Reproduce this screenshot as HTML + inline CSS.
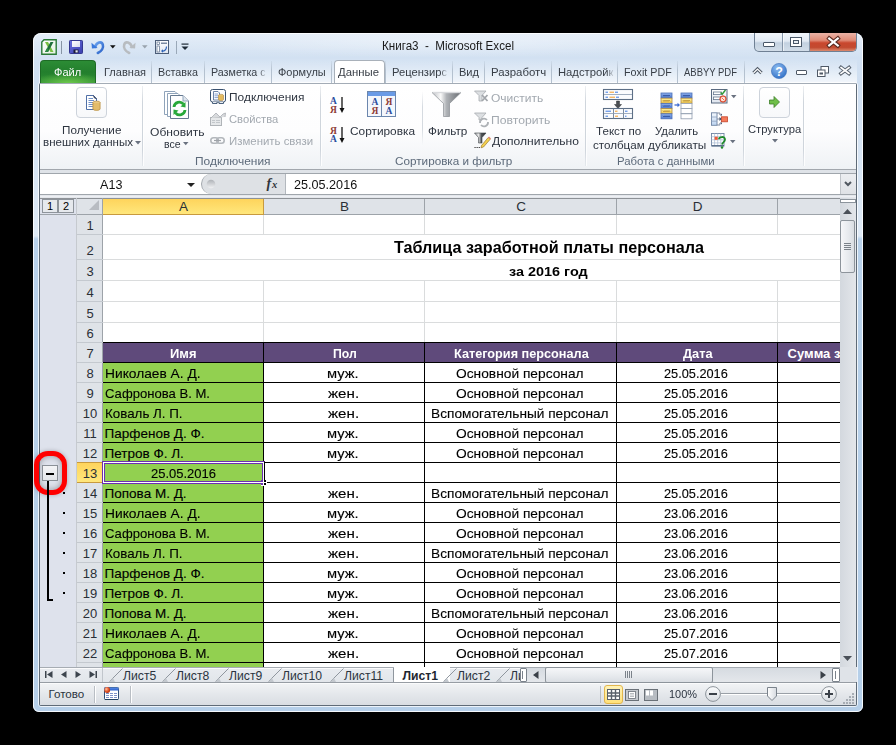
<!DOCTYPE html><html><head><meta charset="utf-8"><style>
*{margin:0;padding:0;box-sizing:border-box}
html,body{width:896px;height:745px;overflow:hidden;background:#000;font-family:"Liberation Sans",sans-serif;position:relative}
.abs{position:absolute}
.t{position:absolute;white-space:nowrap;line-height:1;}
svg{overflow:visible}
</style></head><body>
<div class="abs" style="left:33px;top:33px;width:830px;height:679px;border-radius:8px 8px 6px 6px;background:linear-gradient(180deg,#dbe7f5 0px,#d2e1f2 25px,#cfdff1 50px,#d6e4f3 120px,#dfeaf6 203px,#b9d2eb 206px,#b5cfe9 100%);"></div>
<div class="abs" style="left:33px;top:33px;width:830px;height:679px;border-radius:8px 8px 6px 6px;border:1px solid rgba(255,255,255,0.85);"></div>
<div class="abs" style="left:34px;top:34px;width:828px;height:24px;border-radius:7px 7px 0 0;background:linear-gradient(180deg,rgba(255,255,255,0.25),rgba(255,255,255,0.0));"></div>
<div class="abs" style="left:200px;top:34px;width:480px;height:24px;background:radial-gradient(ellipse at 50% 30%,rgba(255,255,255,0.35),rgba(255,255,255,0) 70%);"></div>
<div class="abs" style="left:39px;top:58px;width:818px;height:25px;background:linear-gradient(180deg,rgba(255,255,255,0.0),rgba(255,255,255,0.35) 50%,rgba(255,255,255,0.75));"></div>
<div class="abs" style="left:38px;top:82px;width:820px;height:625px;border:1px solid rgba(255,255,255,0.75);border-radius:3px;"></div>
<div class="abs" style="left:39px;top:83px;width:818px;height:623px;background:#5f6b77;border-radius:2px;"></div>
<svg class="abs" style="left:41px;top:39px;" width="16" height="16" viewBox="0 0 16 16"><defs><linearGradient id="xb" x1="0" y1="0" x2="1" y2="1"><stop offset="0" stop-color="#ffffff"/><stop offset="1" stop-color="#e4f1e0"/></linearGradient></defs><path d="M3 0.8 H15.2 V15.2 H0.8 V3 Z" fill="url(#xb)" stroke="#2a7a37" stroke-width="1.4"/><path d="M4 3 H7 L12.5 13 H9.5 Z" fill="#79c043"/><path d="M9.5 3 H12.5 L7 13 H4 Z" fill="#1f6f3a"/><path d="M6.3 8.5 L4 13 H7 L7.8 11.4Z" fill="#2c8a43"/></svg>
<div class="abs" style="left:61px;top:41px;width:1px;height:13px;background:#8795a5;"></div>
<svg class="abs" style="left:69px;top:40px;" width="14" height="14" viewBox="0 0 14 14"><defs><linearGradient id="sv" x1="0" y1="0" x2="1" y2="1"><stop offset="0" stop-color="#6a70e0"/><stop offset="1" stop-color="#3b3fae"/></linearGradient><linearGradient id="svl" x1="0" y1="0" x2="1" y2="1"><stop offset="0" stop-color="#ffffff"/><stop offset="1" stop-color="#d8dcef"/></linearGradient></defs><rect x="0.5" y="0.5" width="13" height="13" rx="0.8" fill="url(#sv)" stroke="#34388f"/><rect x="3" y="1" width="8" height="6" fill="url(#svl)"/><rect x="4.5" y="9.5" width="5" height="3.5" fill="#1c1c3a"/><rect x="6.5" y="10.3" width="2.2" height="2.2" fill="#e6e8f2"/></svg>
<svg class="abs" style="left:91px;top:40px;" width="14" height="14" viewBox="0 0 14 14"><defs><linearGradient id="ug" x1="0" y1="0" x2="1" y2="1"><stop offset="0" stop-color="#6aa2ee"/><stop offset="1" stop-color="#2a62c8"/></linearGradient></defs><path d="M4.2 6.8 C5.5 2.2 10.5 0.8 11.8 4.6 C12.8 7.8 10.5 11.2 6.8 13" fill="none" stroke="url(#ug)" stroke-width="2.6" stroke-linecap="round"/><path d="M0.5 2.8 L0.9 8.6 L6.6 8.1 Z" fill="#3a78dc"/></svg>
<svg class="abs" style="left:110px;top:44.5px;" width="6" height="4" viewBox="0 0 6 4"><path d="M0 0.3 H5.6 L2.8 3.6 Z" fill="#111"/></svg>
<svg class="abs" style="left:122px;top:40px;" width="14" height="14" viewBox="0 0 14 14"><path d="M9.8 6.8 C8.5 2.2 3.5 0.8 2.2 4.6 C1.2 7.8 3.5 11.2 7.2 13" fill="none" stroke="#b8bcc0" stroke-width="2.6" stroke-linecap="round"/><path d="M13.5 2.8 L13.1 8.6 L7.4 8.1 Z" fill="#b8bcc0"/></svg>
<svg class="abs" style="left:142px;top:44.5px;" width="6" height="4" viewBox="0 0 6 4"><path d="M0 0.3 H5.6 L2.8 3.6 Z" fill="#9aa3ad"/></svg>
<svg class="abs" style="left:155px;top:40px;" width="14" height="14" viewBox="0 0 14 14"><defs><linearGradient id="cu" x1="0" y1="0" x2="0" y2="1"><stop offset="0" stop-color="#ffffff"/><stop offset="1" stop-color="#dfe6f0"/></linearGradient></defs><rect x="0.5" y="0.5" width="13" height="13" fill="url(#cu)" stroke="#4b5d78"/><rect x="2" y="2" width="2.5" height="2.5" fill="#fff" stroke="#5a6e8c" stroke-width="0.7"/><path d="M6 3.2 H12" stroke="#5a6e8c" stroke-width="1.2"/><rect x="2" y="6" width="2.5" height="6" fill="#fff" stroke="#5a6e8c" stroke-width="0.7"/><path d="M11.5 6.5 C11.5 10 9 11.5 7 11" fill="none" stroke="#2f64b8" stroke-width="1.2"/><path d="M6 11 L8 9.3 L8 12.7Z" fill="#2f64b8"/></svg>
<div class="abs" style="left:176px;top:41px;width:1px;height:13px;background:#9aa8b8;"></div>
<svg class="abs" style="left:181px;top:43px;" width="8" height="8" viewBox="0 0 8 8"><rect x="0.5" y="0.5" width="7" height="1.2" fill="#1e2a36"/><path d="M0.5 3.5 H7.5 L4 7 Z" fill="#1e2a36"/></svg>
<div class="t" style="left:381.6px;top:40.1px;font-size:12.2px;color:#1a1a1a;font-weight:400;transform:scaleX(0.9523);transform-origin:0 0;">Книга3&nbsp;&nbsp;-&nbsp;&nbsp;Microsoft Excel</div>
<div class="abs" style="left:754px;top:33px;width:103px;height:19px;border-radius:0 0 5px 5px;border:1px solid #6f8094;border-top:none;background:linear-gradient(180deg,#f1f5fa 0%,#e2eaf3 45%,#c3d1e0 55%,#d2dde9 100%);overflow:hidden;"></div>
<div class="abs" style="left:782px;top:33px;width:1px;height:18px;background:#8595a8;"></div>
<div class="abs" style="left:783px;top:33px;width:1px;height:18px;background:rgba(255,255,255,0.6);"></div>
<div class="abs" style="left:809px;top:33px;width:1px;height:18px;background:#8595a8;"></div>
<div class="abs" style="left:810px;top:33px;width:46px;height:18px;border-radius:0 0 4px 0;background:linear-gradient(180deg,#eab3a6 0%,#e08c78 40%,#c9472e 55%,#c24a30 80%,#dc8a6e 100%);"></div>
<div class="abs" style="left:763px;top:42px;width:12px;height:5px;background:#fff;border:1px solid #4a5868;border-radius:1px;"></div>
<div class="abs" style="left:790px;top:37px;width:12px;height:10px;border:1px solid #4a5868;background:#fff;"></div>
<div class="abs" style="left:793px;top:40px;width:6px;height:4px;border:1px solid #4a5868;background:#e8edf2;"></div>
<svg class="abs" style="left:827px;top:37px;" width="13" height="10" viewBox="0 0 13 10"><path d="M2.2 1.5 L10.8 8.5 M10.8 1.5 L2.2 8.5" stroke="#5a2a20" stroke-width="4.2" stroke-linecap="square"/><path d="M2.2 1.5 L10.8 8.5 M10.8 1.5 L2.2 8.5" stroke="#fff" stroke-width="2.2" stroke-linecap="square"/></svg>
<div class="abs" style="left:40px;top:60px;width:56px;height:23px;border-radius:4px 4px 0 0;border:1px solid #1d6b25;border-bottom:none;background:radial-gradient(ellipse 70% 45% at 50% 100%,rgba(120,210,80,0.85),rgba(120,210,80,0) 100%),linear-gradient(180deg,#2c8c35 0%,#237f2d 50%,#2f8f34 100%);"></div>
<div class="t" style="left:54.2px;top:66.6px;font-size:11.8px;color:#ffffff;font-weight:400;transform:scaleX(0.9374);transform-origin:0 0;">Файл</div>
<div class="abs" style="left:151px;top:61px;width:1px;height:22px;background:linear-gradient(180deg,rgba(170,185,200,0.2),#b4c1cf 40%,#b4c1cf);"></div>
<div class="abs" style="left:204px;top:61px;width:1px;height:22px;background:linear-gradient(180deg,rgba(170,185,200,0.2),#b4c1cf 40%,#b4c1cf);"></div>
<div class="abs" style="left:271px;top:61px;width:1px;height:22px;background:linear-gradient(180deg,rgba(170,185,200,0.2),#b4c1cf 40%,#b4c1cf);"></div>
<div class="abs" style="left:331px;top:61px;width:1px;height:22px;background:linear-gradient(180deg,rgba(170,185,200,0.2),#b4c1cf 40%,#b4c1cf);"></div>
<div class="abs" style="left:385px;top:61px;width:1px;height:22px;background:linear-gradient(180deg,rgba(170,185,200,0.2),#b4c1cf 40%,#b4c1cf);"></div>
<div class="abs" style="left:452px;top:61px;width:1px;height:22px;background:linear-gradient(180deg,rgba(170,185,200,0.2),#b4c1cf 40%,#b4c1cf);"></div>
<div class="abs" style="left:484px;top:61px;width:1px;height:22px;background:linear-gradient(180deg,rgba(170,185,200,0.2),#b4c1cf 40%,#b4c1cf);"></div>
<div class="abs" style="left:551px;top:61px;width:1px;height:22px;background:linear-gradient(180deg,rgba(170,185,200,0.2),#b4c1cf 40%,#b4c1cf);"></div>
<div class="abs" style="left:617px;top:61px;width:1px;height:22px;background:linear-gradient(180deg,rgba(170,185,200,0.2),#b4c1cf 40%,#b4c1cf);"></div>
<div class="abs" style="left:677px;top:61px;width:1px;height:22px;background:linear-gradient(180deg,rgba(170,185,200,0.2),#b4c1cf 40%,#b4c1cf);"></div>
<div class="abs" style="left:744px;top:61px;width:1px;height:22px;background:linear-gradient(180deg,rgba(170,185,200,0.2),#b4c1cf 40%,#b4c1cf);"></div>
<div class="abs" style="left:334px;top:60px;width:51px;height:24px;border-radius:4px 4px 0 0;border:1px solid #a9b1ba;border-bottom:none;background:#fff;"></div>
<div class="t" style="left:103.7px;top:66.1px;font-size:11.6px;color:#383e46;font-weight:400;transform:scaleX(0.9515);transform-origin:0 0;">Главная</div>
<div class="t" style="left:158px;top:66.1px;font-size:11.6px;color:#383e46;font-weight:400;transform:scaleX(0.9282);transform-origin:0 0;">Вставка</div>
<div class="t" style="left:211.4px;top:66.1px;font-size:11.6px;color:#383e46;font-weight:400;transform:scaleX(0.9235);transform-origin:0 0;-webkit-mask-image:linear-gradient(90deg,#000 88%,rgba(0,0,0,0.15));">Разметка с</div>
<div class="t" style="left:277.9px;top:66.1px;font-size:11.6px;color:#383e46;font-weight:400;transform:scaleX(0.9454);transform-origin:0 0;">Формулы</div>
<div class="t" style="left:337.9px;top:66.1px;font-size:11.6px;color:#383e46;font-weight:400;transform:scaleX(0.9787);transform-origin:0 0;">Данные</div>
<div class="t" style="left:392px;top:66.1px;font-size:11.6px;color:#383e46;font-weight:400;transform:scaleX(0.9636);transform-origin:0 0;-webkit-mask-image:linear-gradient(90deg,#000 88%,rgba(0,0,0,0.15));">Рецензирс</div>
<div class="t" style="left:459px;top:66.1px;font-size:11.6px;color:#383e46;font-weight:400;transform:scaleX(0.9531);transform-origin:0 0;">Вид</div>
<div class="t" style="left:491.4px;top:66.1px;font-size:11.6px;color:#383e46;font-weight:400;transform:scaleX(0.9846);transform-origin:0 0;">Разработч</div>
<div class="t" style="left:557.6px;top:66.1px;font-size:11.6px;color:#383e46;font-weight:400;transform:scaleX(0.9695);transform-origin:0 0;-webkit-mask-image:linear-gradient(90deg,#000 88%,rgba(0,0,0,0.15));">Надстройк</div>
<div class="t" style="left:624px;top:66.1px;font-size:11.6px;color:#383e46;font-weight:400;transform:scaleX(0.9254);transform-origin:0 0;">Foxit PDF</div>
<div class="t" style="left:684px;top:66.1px;font-size:11.6px;color:#383e46;font-weight:400;transform:scaleX(0.8170);transform-origin:0 0;">ABBYY PDF</div>
<svg class="abs" style="left:752px;top:67px;" width="11" height="8" viewBox="0 0 11 8"><path d="M1.5 6 L5.5 2 L9.5 6" fill="none" stroke="#4f5966" stroke-width="3.2" stroke-linejoin="miter"/><path d="M1.5 6 L5.5 2 L9.5 6" fill="none" stroke="#fff" stroke-width="1.2"/></svg>
<svg class="abs" style="left:771px;top:63px;" width="16" height="16" viewBox="0 0 16 16"><defs><radialGradient id="hg" cx="40%" cy="30%" r="70%"><stop offset="0" stop-color="#8dbcf0"/><stop offset="1" stop-color="#3574c9"/></radialGradient></defs><circle cx="8" cy="8" r="7.6" fill="url(#hg)" stroke="#3a6fb8" stroke-width="0.6"/><text x="8" y="12.8" text-anchor="middle" font-family="Liberation Sans" font-weight="700" font-size="12.5" fill="#fff">?</text></svg>
<div class="abs" style="left:796px;top:70px;width:11px;height:5px;border:1px solid #4f5966;background:#fff;border-radius:1px;"></div>
<svg class="abs" style="left:817px;top:66px;" width="12" height="11" viewBox="0 0 12 11"><rect x="4" y="0.5" width="7.5" height="6.5" fill="#fff" stroke="#4f5966"/><rect x="0.5" y="4" width="7.5" height="6.5" fill="#fff" stroke="#4f5966"/><rect x="2.5" y="6.5" width="3.5" height="2" fill="#4f5966"/></svg>
<svg class="abs" style="left:839px;top:66px;" width="12" height="9" viewBox="0 0 12 9"><path d="M2 1.5 L10 7.5 M10 1.5 L2 7.5" stroke="#5a6470" stroke-width="3.6" stroke-linecap="square"/><path d="M2 1.5 L10 7.5 M10 1.5 L2 7.5" stroke="#fff" stroke-width="1.6" stroke-linecap="square"/></svg>
<div class="abs" style="left:40px;top:83px;width:816px;height:86px;background:linear-gradient(180deg,#ffffff 0%,#fdfdfe 55%,#eff2f5 100%);border-top:1px solid #a3acb6;"></div>
<div class="abs" style="left:40px;top:169px;width:816px;height:1px;background:#a2a7ad;"></div>
<div class="abs" style="left:142px;top:86px;width:1px;height:80px;background:linear-gradient(180deg,rgba(200,207,215,0.3),#cfd5dc 20%,#cfd5dc 80%,rgba(200,207,215,0.3));"></div>
<div class="abs" style="left:143px;top:86px;width:1px;height:80px;background:rgba(255,255,255,0.8);"></div>
<div class="abs" style="left:320px;top:86px;width:1px;height:80px;background:linear-gradient(180deg,rgba(200,207,215,0.3),#cfd5dc 20%,#cfd5dc 80%,rgba(200,207,215,0.3));"></div>
<div class="abs" style="left:321px;top:86px;width:1px;height:80px;background:rgba(255,255,255,0.8);"></div>
<div class="abs" style="left:585px;top:86px;width:1px;height:80px;background:linear-gradient(180deg,rgba(200,207,215,0.3),#cfd5dc 20%,#cfd5dc 80%,rgba(200,207,215,0.3));"></div>
<div class="abs" style="left:586px;top:86px;width:1px;height:80px;background:rgba(255,255,255,0.8);"></div>
<div class="abs" style="left:743px;top:86px;width:1px;height:80px;background:linear-gradient(180deg,rgba(200,207,215,0.3),#cfd5dc 20%,#cfd5dc 80%,rgba(200,207,215,0.3));"></div>
<div class="abs" style="left:744px;top:86px;width:1px;height:80px;background:rgba(255,255,255,0.8);"></div>
<div class="abs" style="left:803px;top:86px;width:1px;height:80px;background:linear-gradient(180deg,rgba(200,207,215,0.3),#cfd5dc 20%,#cfd5dc 80%,rgba(200,207,215,0.3));"></div>
<div class="abs" style="left:804px;top:86px;width:1px;height:80px;background:rgba(255,255,255,0.8);"></div>
<div class="t" style="left:194.79999999999998px;top:154.9px;font-size:11.6px;color:#5d6a7a;font-weight:400;transform:scaleX(1.0305);transform-origin:0 0;">Подключения</div>
<div class="t" style="left:395.0px;top:154.9px;font-size:11.6px;color:#5d6a7a;font-weight:400;transform:scaleX(1.0100);transform-origin:0 0;">Сортировка и фильтр</div>
<div class="t" style="left:616.8000000000001px;top:154.9px;font-size:11.6px;color:#5d6a7a;font-weight:400;transform:scaleX(0.9829);transform-origin:0 0;">Работа с данными</div>
<div class="abs" style="left:76px;top:87px;width:31px;height:31px;border:1px solid #cdd3db;border-radius:4px;background:linear-gradient(180deg,#fff,#f7f8fa);"></div>
<svg class="abs" style="left:86px;top:95px;" width="15" height="16" viewBox="0 0 15 16"><path d="M0.5 0.5 H7.5 L10.5 3.5 V14.5 H0.5 Z" fill="#fff" stroke="#4f6fa6"/><path d="M2.5 3.5 H7 M2.5 5.5 H8 M2.5 7.5 H8 M2.5 9.5 H8 M2.5 11.5 H8" stroke="#6d8fc8" stroke-width="1"/><path d="M7.5 0.5 L8.5 3 L10.5 3.5" fill="none" stroke="#2a3550"/><ellipse cx="10.5" cy="7.5" rx="3.6" ry="1.4" fill="#f2d79a" stroke="#b58a3a" stroke-width="0.7"/><path d="M6.9 7.5 V14 A3.6 1.4 0 0 0 14.1 14 V7.5" fill="#e3bc6a" stroke="#b58a3a" stroke-width="0.7"/></svg>
<div class="t" style="left:61.6px;top:123.7px;font-size:11.6px;color:#2e3540;font-weight:400;transform:scaleX(1.0084);transform-origin:0 0;">Получение</div>
<div class="t" style="left:42.6px;top:135.7px;font-size:11.6px;color:#2e3540;font-weight:400;transform:scaleX(0.9960);transform-origin:0 0;">внешних данных</div>
<svg class="abs" style="left:135px;top:141px;" width="6" height="4" viewBox="0 0 6 4"><path d="M0 0 H6 L3 3.5Z" fill="#6a7280"/></svg>
<svg class="abs" style="left:163px;top:90px;" width="28" height="30" viewBox="0 0 28 30"><path d="M1.5 1.5 H12 L14 3.5 V24.5 H1.5Z" fill="#fff" stroke="#8fa3ba"/><path d="M4.5 3.5 H15 L17 5.5 V26.5 H4.5Z" fill="#fff" stroke="#8fa3ba"/><path d="M7.5 5.5 H20 L25.5 11 V28.5 H7.5Z" fill="#fdfdfe" stroke="#64788f"/><path d="M20 5.5 V11 H25.5" fill="#dfe6ee" stroke="#8fa3ba"/><path d="M11 17 A5.3 5.3 0 0 1 20.5 14.2" fill="none" stroke="#27a83a" stroke-width="2.8"/><path d="M22.5 12 L22.5 17.5 L17.5 16.5Z" fill="#27a83a"/><path d="M22 20 A5.3 5.3 0 0 1 12.5 22.8" fill="none" stroke="#27a83a" stroke-width="2.8"/><path d="M10.5 25 L10.5 19.5 L15.5 20.5Z" fill="#27a83a"/></svg>
<div class="t" style="left:149.7px;top:125.9px;font-size:11.6px;color:#2e3540;font-weight:400;transform:scaleX(1.0400);transform-origin:0 0;">Обновить</div>
<div class="t" style="left:163.79999999999998px;top:137.6px;font-size:11.6px;color:#2e3540;font-weight:400;transform:scaleX(0.9080);transform-origin:0 0;">все</div>
<svg class="abs" style="left:183px;top:142px;" width="6" height="4" viewBox="0 0 6 4"><path d="M0 0 H5.5 L2.75 3.2Z" fill="#6a7280"/></svg>
<svg class="abs" style="left:210px;top:89px;" width="17" height="16" viewBox="0 0 17 16"><path d="M2.5 0.5 H13.5 A2 2 0 0 1 15.5 2.5 V11 A2 2 0 0 1 13.5 13 H2.5 A2 2 0 0 1 0.5 11 V2.5 A2 2 0 0 1 2.5 0.5Z" fill="#fbfcfe" stroke="#38506e"/><path d="M2.5 13 V14.5 H7 V13 M9 13 V14.5 H13.5 V13" fill="#e8edf3" stroke="#38506e" stroke-width="0.9"/><path d="M3.5 2.5 H8 L9.5 4 V11 H3.5Z" fill="#fff" stroke="#4a6490" stroke-width="0.8"/><path d="M4.5 5 H8.2 M4.5 6.8 H8.2 M4.5 8.6 H8.2" stroke="#6b8cc6" stroke-width="0.8"/><ellipse cx="11" cy="6.3" rx="2.5" ry="1" fill="#f6dea0" stroke="#a9823a" stroke-width="0.6"/><path d="M8.5 6.3 V10.6 A2.5 1 0 0 0 13.5 10.6 V6.3" fill="#e3b95c" stroke="#a9823a" stroke-width="0.6"/></svg>
<div class="t" style="left:229.0px;top:91.0px;font-size:11.6px;color:#2e3540;font-weight:400;transform:scaleX(1.0278);transform-origin:0 0;">Подключения</div>
<svg class="abs" style="left:210px;top:112px;" width="16" height="14" viewBox="0 0 16 14"><rect x="0.5" y="5.5" width="11" height="8" fill="#e6e8ea" stroke="#b0b4b8"/><path d="M2 8.5 H5 M6 8.5 H10 M2 10.5 H5 M6 10.5 H10" stroke="#b9bdc1" stroke-width="0.8"/><path d="M1 6 L6 1 L10 5 L13 2 L15.5 1 L15 5" fill="#d8dadd" stroke="#a9adb2" stroke-width="0.8"/></svg>
<div class="t" style="left:229.0px;top:113.1px;font-size:11.6px;color:#a3a9b0;font-weight:400;transform:scaleX(0.9662);transform-origin:0 0;">Свойства</div>
<svg class="abs" style="left:210px;top:137px;" width="15" height="7" viewBox="0 0 15 7"><rect x="0.8" y="0.8" width="7.5" height="5.4" rx="2.7" fill="none" stroke="#b3b7bc" stroke-width="1.6"/><rect x="6.7" y="0.8" width="7.5" height="5.4" rx="2.7" fill="none" stroke="#b3b7bc" stroke-width="1.6"/><path d="M4 3.5 H11" stroke="#9ea3a8" stroke-width="1.2"/></svg>
<div class="t" style="left:229.0px;top:134.8px;font-size:11.6px;color:#a3a9b0;font-weight:400;transform:scaleX(0.9845);transform-origin:0 0;">Изменить связи</div>
<div class="t" style="left:330px;top:97.1px;font-size:9.5px;font-family:'Liberation Serif',serif;font-weight:700;color:#2a4d9e">А</div>
<div class="t" style="left:330px;top:105.6px;font-size:9.5px;font-family:'Liberation Serif',serif;font-weight:700;color:#8e3b36">Я</div>
<svg class="abs" style="left:339px;top:97px;" width="6" height="17" viewBox="0 0 6 17"><path d="M3 0 V14" stroke="#111" stroke-width="1.3"/><path d="M0.5 11 L3 16 L5.5 11Z" fill="#111"/></svg>
<div class="t" style="left:330px;top:126.6px;font-size:9.5px;font-family:'Liberation Serif',serif;font-weight:700;color:#8e3b36">Я</div>
<div class="t" style="left:330px;top:135.1px;font-size:9.5px;font-family:'Liberation Serif',serif;font-weight:700;color:#2a4d9e">А</div>
<svg class="abs" style="left:339px;top:127px;" width="6" height="17" viewBox="0 0 6 17"><path d="M3 0 V14" stroke="#111" stroke-width="1.3"/><path d="M0.5 11 L3 16 L5.5 11Z" fill="#111"/></svg>
<svg class="abs" style="left:367px;top:91px;" width="30" height="27" viewBox="0 0 30 27"><rect x="0.5" y="0.5" width="28" height="25" fill="#f4f7fc" stroke="#6b86ad"/><rect x="1" y="1" width="27" height="4" fill="#6a9be6"/><path d="M14.5 5 V25.5" stroke="#6b86ad"/></svg>
<div class="t" style="left:371.5px;top:97.6px;font-size:9.5px;font-family:'Liberation Serif',serif;font-weight:700;color:#2a4d9e">А</div>
<div class="t" style="left:371.5px;top:106.6px;font-size:9.5px;font-family:'Liberation Serif',serif;font-weight:700;color:#8e3b36">Я</div>
<div class="t" style="left:385.5px;top:97.6px;font-size:9.5px;font-family:'Liberation Serif',serif;font-weight:700;color:#8e3b36">Я</div>
<div class="t" style="left:385.5px;top:106.6px;font-size:9.5px;font-family:'Liberation Serif',serif;font-weight:700;color:#2a4d9e">А</div>
<div class="t" style="left:350.0px;top:125.0px;font-size:11.6px;color:#2e3540;font-weight:400;transform:scaleX(1.0214);transform-origin:0 0;">Сортировка</div>
<div class="abs" style="left:422px;top:91px;width:1px;height:54px;background:linear-gradient(180deg,rgba(210,215,222,0),#d5dae0 30%,#d5dae0 70%,rgba(210,215,222,0));"></div>
<svg class="abs" style="left:431px;top:91px;" width="32" height="27" viewBox="0 0 32 27"><defs><linearGradient id="fg" x1="0" x2="1"><stop offset="0" stop-color="#b9bcc0"/><stop offset="0.3" stop-color="#fafafa"/><stop offset="0.5" stop-color="#b0b3b7"/><stop offset="1" stop-color="#686c71"/></linearGradient></defs><path d="M1 1.5 H30 L18.5 12.5 V25.5 H12.5 V12.5 Z" fill="url(#fg)" stroke="#8a8e93" stroke-width="0.7"/><path d="M1.5 1.5 H29.5" stroke="#d8dadd" stroke-width="1.4"/></svg>
<div class="t" style="left:427.7px;top:125.2px;font-size:11.6px;color:#2e3540;font-weight:400;transform:scaleX(1.0115);transform-origin:0 0;">Фильтр</div>
<svg class="abs" style="left:474px;top:90px;" width="15" height="13" viewBox="0 0 15 13"><path d="M0.5 1 H12 L8 5.5 V11 H5 V5.5Z" fill="#dcdfe2" stroke="#a7abb0" stroke-width="0.8"/><path d="M8 5 L13.5 11 M13.5 5 L8 11" stroke="#a2a6ab" stroke-width="1.8"/></svg>
<div class="t" style="left:491.3px;top:91.5px;font-size:11.6px;color:#a3a9b0;font-weight:400;transform:scaleX(1.0363);transform-origin:0 0;">Очистить</div>
<svg class="abs" style="left:474px;top:112px;" width="15" height="14" viewBox="0 0 15 14"><path d="M0.5 1 H12 L8 5.5 V8 H5 V5.5Z" fill="#dcdfe2" stroke="#a7abb0" stroke-width="0.8"/><path d="M6 11 A4 4 0 0 1 13 8" fill="none" stroke="#aeb2b6" stroke-width="1.8"/><path d="M7 13 A4 4 0 0 0 14 10" fill="none" stroke="#aeb2b6" stroke-width="1.8"/></svg>
<div class="t" style="left:491.3px;top:113.8px;font-size:11.6px;color:#a3a9b0;font-weight:400;transform:scaleX(1.0496);transform-origin:0 0;">Повторить</div>
<svg class="abs" style="left:474px;top:132px;" width="17" height="16" viewBox="0 0 17 16"><defs><linearGradient id="fg2" x1="0" x2="1"><stop offset="0" stop-color="#9a9da1"/><stop offset="0.35" stop-color="#e8e8e8"/><stop offset="0.6" stop-color="#505458"/><stop offset="1" stop-color="#2a2d30"/></linearGradient></defs><path d="M0.5 1 H12 L8 5.5 V11 H4.5 V5.5Z" fill="url(#fg2)" stroke="#3a3f45" stroke-width="0.6"/><path d="M7.5 13.5 L14.2 5.5 L16.2 7.3 L9.5 15 L7 15.8Z" fill="#f3d050" stroke="#8a6a22" stroke-width="0.6"/><path d="M14.2 5.5 L15 4.6 L17 6.4 L16.2 7.3Z" fill="#e07a6a"/><path d="M0.5 15.5 H6.5" stroke="#222" stroke-width="1.1" stroke-dasharray="1.1 1"/></svg>
<div class="t" style="left:491.8px;top:134.9px;font-size:11.6px;color:#2e3540;font-weight:400;transform:scaleX(1.0413);transform-origin:0 0;">Дополнительно</div>
<svg class="abs" style="left:602px;top:88px;" width="32" height="32" viewBox="0 0 32 32"><rect x="1.5" y="1.5" width="29" height="10" fill="#fbfcfe" stroke="#5d6f86" stroke-width="1.1"/><path d="M2 6.5 H30" stroke="#8b9bb0" stroke-width="0.8"/><path d="M3.5 4.2 H6 M13 4.2 H16 M3.5 9.2 H6 M14 9.2 H17" stroke="#3b78e0" stroke-width="1"/><path d="M7.5 4.2 H12 M7.5 9.2 H13" stroke="#f29a26" stroke-width="1"/><path d="M14.5 13 H17.5 V16.5 H19.5 L16 20.5 L12.5 16.5 H14.5 Z" fill="#4a4d52" stroke="#2f3236" stroke-width="0.5"/><rect x="1.5" y="20.5" width="29" height="10" fill="#fbfcfe" stroke="#5d6f86" stroke-width="1.1"/><path d="M11.5 20.5 V30.5 M21.5 20.5 V30.5" stroke="#6d7e94" stroke-width="0.9"/><path d="M2 25.5 H30" stroke="#8b9bb0" stroke-width="0.8"/><path d="M3.5 23.2 H9 M23 23.2 H25.5 M3.5 28.2 H6 M23 28.2 H24.5" stroke="#3b78e0" stroke-width="1"/><path d="M13 23.2 H15.5 M13 28.2 H16" stroke="#f29a26" stroke-width="1"/></svg>
<div class="t" style="left:595.8000000000001px;top:125.1px;font-size:11.6px;color:#2e3540;font-weight:400;transform:scaleX(1.0013);transform-origin:0 0;">Текст по</div>
<div class="t" style="left:592.5px;top:138.5px;font-size:11.6px;color:#2e3540;font-weight:400;transform:scaleX(1.0011);transform-origin:0 0;">столбцам</div>
<svg class="abs" style="left:660px;top:92px;" width="34" height="28" viewBox="0 0 34 28"><defs><linearGradient id="rdb" x1="0" y1="0" x2="0" y2="1"><stop offset="0" stop-color="#8fb0ea"/><stop offset="1" stop-color="#4f7ad0"/></linearGradient><linearGradient id="rdy" x1="0" y1="0" x2="0" y2="1"><stop offset="0" stop-color="#fff2a0"/><stop offset="1" stop-color="#f0c850"/></linearGradient></defs><rect x="1" y="1" width="11" height="5" fill="url(#rdb)" stroke="#4a6fb8" stroke-width="0.8"/><path d="M3 3 l1 1.2 l1 -1.2 l1 1.2 l1 -1.2 l1 1.2 l1 -1.2 l1 1.2" fill="none" stroke="#1f3f8a" stroke-width="0.7"/><rect x="1" y="6.2" width="11" height="5" fill="url(#rdy)" stroke="#b08a40" stroke-width="0.8"/><path d="M3 8.2 l1 1.2 l1 -1.2 l1 1.2 l1 -1.2 l1 1.2 l1 -1.2 l1 1.2" fill="none" stroke="#9a6a10" stroke-width="0.7"/><rect x="1" y="11.4" width="11" height="5" fill="url(#rdb)" stroke="#4a6fb8" stroke-width="0.8"/><path d="M3 13.4 l1 1.2 l1 -1.2 l1 1.2 l1 -1.2 l1 1.2 l1 -1.2 l1 1.2" fill="none" stroke="#1f3f8a" stroke-width="0.7"/><rect x="1" y="16.6" width="11" height="5" fill="url(#rdy)" stroke="#b08a40" stroke-width="0.8"/><path d="M3 18.6 l1 1.2 l1 -1.2 l1 1.2 l1 -1.2 l1 1.2 l1 -1.2 l1 1.2" fill="none" stroke="#9a6a10" stroke-width="0.7"/><rect x="1" y="21.8" width="11" height="5" fill="url(#rdb)" stroke="#4a6fb8" stroke-width="0.8"/><path d="M3 23.8 l1 1.2 l1 -1.2 l1 1.2 l1 -1.2 l1 1.2 l1 -1.2 l1 1.2" fill="none" stroke="#1f3f8a" stroke-width="0.7"/><path d="M14.5 13 H18.5" stroke="#3b6ad2" stroke-width="1.3"/><path d="M17.5 10.8 L20 13 L17.5 15.2Z" fill="#3b6ad2"/><rect x="21" y="1" width="11" height="5" fill="url(#rdb)" stroke="#4a6fb8" stroke-width="0.8"/><path d="M23 3 l1 1.2 l1 -1.2 l1 1.2 l1 -1.2 l1 1.2 l1 -1.2 l1 1.2" fill="none" stroke="#1f3f8a" stroke-width="0.7"/><rect x="21" y="6.2" width="11" height="5" fill="url(#rdy)" stroke="#b08a40" stroke-width="0.8"/><path d="M23 8.2 l1 1.2 l1 -1.2 l1 1.2 l1 -1.2 l1 1.2 l1 -1.2 l1 1.2" fill="none" stroke="#9a6a10" stroke-width="0.7"/><rect x="21" y="11.4" width="11" height="5" fill="#fff" stroke="#8f9cae" stroke-width="0.8"/><rect x="21" y="16.6" width="11" height="5" fill="#fff" stroke="#8f9cae" stroke-width="0.8"/><rect x="21" y="21.8" width="11" height="5" fill="#fff" stroke="#8f9cae" stroke-width="0.8"/></svg>
<div class="t" style="left:655.1px;top:125.1px;font-size:11.6px;color:#2e3540;font-weight:400;transform:scaleX(0.9737);transform-origin:0 0;">Удалить</div>
<div class="t" style="left:647.5px;top:138.5px;font-size:11.6px;color:#2e3540;font-weight:400;transform:scaleX(1.0189);transform-origin:0 0;">дубликаты</div>
<svg class="abs" style="left:711px;top:89px;" width="17" height="15" viewBox="0 0 17 15"><defs><linearGradient id="dv" x1="0" y1="0" x2="0" y2="1"><stop offset="0" stop-color="#ffffff"/><stop offset="1" stop-color="#dde4ee"/></linearGradient></defs><rect x="0.5" y="0.5" width="15.5" height="13.5" fill="url(#dv)" stroke="#5a6a80"/><rect x="2.5" y="3" width="8" height="2.6" fill="#fff" stroke="#6a7a90" stroke-width="0.8"/><rect x="2.5" y="8" width="8" height="2.6" fill="#fff" stroke="#6a7a90" stroke-width="0.8"/><path d="M9.5 3.5 L11.2 5.2 L14.5 1" fill="none" stroke="#2f9a3a" stroke-width="1.5"/><circle cx="12" cy="10" r="3.2" fill="#f36a4a" stroke="#c83a22" stroke-width="0.8"/><circle cx="12" cy="10" r="1.8" fill="none" stroke="#fff" stroke-width="0.9"/><path d="M10.6 11.4 L13.4 8.6" stroke="#fff" stroke-width="0.9"/></svg>
<svg class="abs" style="left:731px;top:95px;" width="6" height="4" viewBox="0 0 6 4"><path d="M0 0 H5.5 L2.75 3.2Z" fill="#6a7280"/></svg>
<svg class="abs" style="left:711px;top:112px;" width="17" height="14" viewBox="0 0 17 14"><defs><linearGradient id="cs" x1="0" y1="0" x2="0" y2="1"><stop offset="0" stop-color="#f4f8fd"/><stop offset="1" stop-color="#bcd3f0"/></linearGradient></defs><rect x="0.5" y="0.8" width="5.5" height="12.5" fill="url(#cs)" stroke="#6f84a3" stroke-width="0.9"/><path d="M0.5 5 H6 M0.5 9.2 H6" stroke="#8fa3bf" stroke-width="0.8"/><path d="M6.5 1 H9 V3 M6.5 13 H9 V11 M6.5 7 H9" fill="none" stroke="#3a4c6a" stroke-width="0.9" stroke-dasharray="1.2 0.6"/><path d="M8.5 5 L10.8 7 L8.5 9Z" fill="#3a4c6a"/><path d="M11 1.5 L9 3.5 L11 3.5Z M11 12.5 L9 10.5 L11 10.5Z" fill="#3a4c6a"/><rect x="10.5" y="4.8" width="6" height="5" fill="#f57a5a" stroke="#c4442a" stroke-width="0.8"/></svg>
<svg class="abs" style="left:711px;top:133px;" width="17" height="17" viewBox="0 0 17 17"><rect x="0.5" y="0.5" width="12.5" height="12.5" fill="#fff" stroke="#6f84a3" stroke-width="0.9"/><path d="M0.5 3.7 H13 M0.5 6.8 H13 M0.5 9.9 H13 M3.6 0.5 V13 M6.7 0.5 V13 M9.8 0.5 V13" stroke="#a9bad2" stroke-width="0.7"/><path d="M1 12.8 H13" stroke="#38506e" stroke-width="1"/><rect x="3.6" y="3.7" width="3.1" height="3.1" fill="#ef5a36"/><path d="M8 6.2 C8 3.5 14 3 14 6.5 C14 9 11.5 9 11 11.5" fill="none" stroke="#1f8a2a" stroke-width="1.8"/><circle cx="11" cy="14.5" r="1.2" fill="#1f8a2a"/></svg>
<svg class="abs" style="left:729.5px;top:139.5px;" width="6" height="4" viewBox="0 0 6 4"><path d="M0 0 H5.5 L2.75 3.2Z" fill="#6a7280"/></svg>
<div class="abs" style="left:759px;top:87px;width:31px;height:31px;border:1px solid #cdd3db;border-radius:4px;background:linear-gradient(180deg,#fff,#f7f8fa);"></div>
<svg class="abs" style="left:769px;top:96px;" width="11" height="12" viewBox="0 0 11 12"><path d="M0.5 4 H5 V0.5 L10.5 6 L5 11.5 V8 H0.5Z" fill="#6fbf48" stroke="#3d7f2a" stroke-width="0.8"/></svg>
<div class="t" style="left:748.0px;top:122.9px;font-size:11.6px;color:#2e3540;font-weight:400;transform:scaleX(0.9670);transform-origin:0 0;">Структура</div>
<svg class="abs" style="left:772px;top:139px;" width="6" height="4" viewBox="0 0 6 4"><path d="M0 0 H6 L3 3.5Z" fill="#6a7280"/></svg>
<div class="abs" style="left:40px;top:170px;width:816px;height:28px;background:#dfe3e8;"></div>
<div class="abs" style="left:40px;top:195px;width:816px;height:3px;background:linear-gradient(180deg,#dfe3e8,#eef0f4 50%,#dfe3e8);"></div>
<div class="abs" style="left:40px;top:173px;width:816px;height:22px;background:#fff;border-top:1px solid #a0a6ac;border-bottom:1px solid #a0a6ac;"></div>
<div class="t" style="left:100px;top:178.6px;font-size:12.8px;color:#111;font-weight:400;transform:scaleX(0.9833);transform-origin:0 0;">A13</div>
<svg class="abs" style="left:187px;top:183px;" width="8" height="4" viewBox="0 0 8 4"><path d="M0 0 H8 L4 4Z" fill="#222"/></svg>
<div class="abs" style="left:201px;top:174px;width:85px;height:20px;background:#dee1e5;border-left:1px solid #a3a8ae;border-radius:10px 0 0 10px;"></div>
<div class="abs" style="left:285px;top:174px;width:1px;height:20px;background:#b3b8be;"></div>
<svg class="abs" style="left:206px;top:179px;" width="10" height="10" viewBox="0 0 10 10"><defs><linearGradient id="pb" x1="0" y1="0" x2="0" y2="1"><stop offset="0" stop-color="#aeb2b7"/><stop offset="1" stop-color="#f1f2f4"/></linearGradient></defs><circle cx="5" cy="5" r="4.3" fill="url(#pb)"/></svg>
<svg class="abs" style="left:266px;top:177px;" width="14" height="14" viewBox="0 0 14 14"><text x="0.5" y="11" font-family="Liberation Serif" font-style="italic" font-weight="700" font-size="14" fill="#30343a">f</text><text x="6" y="11" font-family="Liberation Serif" font-style="italic" font-weight="700" font-size="10.5" fill="#30343a">x</text></svg>
<div class="t" style="left:294.3px;top:178.6px;font-size:12.8px;color:#111;font-weight:400;transform:scaleX(0.9865);transform-origin:0 0;">25.05.2016</div>
<div class="abs" style="left:840px;top:174px;width:16px;height:20px;background:linear-gradient(180deg,#eceef1,#dfe2e6);border-left:1px solid #c0c4c9;"></div>
<svg class="abs" style="left:844px;top:181px;" width="8" height="6" viewBox="0 0 8 6"><path d="M1 1 L4 4 L7 1" fill="none" stroke="#505860" stroke-width="2"/></svg>
<div class="abs" style="left:40px;top:198px;width:37px;height:469px;background:#dee2ec;"></div>
<div class="abs" style="left:40px;top:198px;width:37px;height:1px;background:#8e9297;"></div>
<div class="abs" style="left:40px;top:214px;width:37px;height:1px;background:#9da3a9;"></div>
<div class="abs" style="left:42px;top:199px;width:16px;height:14px;background:#e6e9ed;border:1px solid #8e949b;"></div>
<div class="t" style="left:42px;width:16px;text-align:center;top:201.2px;font-size:11px;color:#000;font-weight:400;">1</div>
<div class="abs" style="left:58px;top:199px;width:16px;height:14px;background:#e6e9ed;border:1px solid #8e949b;"></div>
<div class="t" style="left:58px;width:16px;text-align:center;top:201.2px;font-size:11px;color:#000;font-weight:400;">2</div>
<div class="abs" style="left:77px;top:198px;width:763px;height:17px;background:#dfe3e8;border-top:1px solid #8e9297;border-bottom:1px solid #9da3a9;"></div>
<svg class="abs" style="left:88px;top:200px;" width="12" height="11" viewBox="0 0 12 11"><path d="M11 0 V10 H1 Z" fill="#b8bcc2"/></svg>
<div class="abs" style="left:76px;top:198px;width:1px;height:469px;background:#c6cacf;"></div>
<div class="abs" style="left:77px;top:215px;width:26px;height:452px;background:#dfe3e8;"></div>
<div class="abs" style="left:102px;top:198px;width:1px;height:469px;background:#9da3a9;"></div>
<div class="abs" style="left:103px;top:215px;width:737px;height:452px;background:#fff;"></div>
<div class="abs" style="left:263px;top:199px;width:1px;height:15px;background:#9da3a9;"></div>
<div class="abs" style="left:424px;top:199px;width:1px;height:15px;background:#9da3a9;"></div>
<div class="abs" style="left:616px;top:199px;width:1px;height:15px;background:#9da3a9;"></div>
<div class="abs" style="left:777px;top:199px;width:1px;height:15px;background:#9da3a9;"></div>
<div class="abs" style="left:103px;top:199px;width:161px;height:16px;background:linear-gradient(180deg,#fed45c,#ffe77c);border-right:1px solid #c89a3e;border-bottom:1px solid #c89a3e;"></div>
<div class="t" style="left:103px;width:161px;text-align:center;top:199.5px;font-size:13.5px;color:#2a2f36;font-weight:400;">A</div>
<div class="t" style="left:264px;width:161px;text-align:center;top:199.5px;font-size:13.5px;color:#2a2f36;font-weight:400;">B</div>
<div class="t" style="left:425px;width:192px;text-align:center;top:199.5px;font-size:13.5px;color:#2a2f36;font-weight:400;">C</div>
<div class="t" style="left:617px;width:161px;text-align:center;top:199.5px;font-size:13.5px;color:#2a2f36;font-weight:400;">D</div>
<div class="abs" style="left:263px;top:215px;width:1px;height:452px;background:#dadcdd;"></div>
<div class="abs" style="left:424px;top:215px;width:1px;height:452px;background:#dadcdd;"></div>
<div class="abs" style="left:616px;top:215px;width:1px;height:452px;background:#dadcdd;"></div>
<div class="abs" style="left:777px;top:215px;width:1px;height:452px;background:#dadcdd;"></div>
<div class="abs" style="left:77px;top:234px;width:26px;height:1px;background:#c4c9cf;"></div>
<div class="abs" style="left:103px;top:234px;width:737px;height:1px;background:#dadcdd;"></div>
<div class="abs" style="left:77px;top:259px;width:26px;height:1px;background:#c4c9cf;"></div>
<div class="abs" style="left:103px;top:259px;width:737px;height:1px;background:#dadcdd;"></div>
<div class="abs" style="left:77px;top:280px;width:26px;height:1px;background:#c4c9cf;"></div>
<div class="abs" style="left:103px;top:280px;width:737px;height:1px;background:#dadcdd;"></div>
<div class="abs" style="left:77px;top:301px;width:26px;height:1px;background:#c4c9cf;"></div>
<div class="abs" style="left:103px;top:301px;width:737px;height:1px;background:#dadcdd;"></div>
<div class="abs" style="left:77px;top:322px;width:26px;height:1px;background:#c4c9cf;"></div>
<div class="abs" style="left:103px;top:322px;width:737px;height:1px;background:#dadcdd;"></div>
<div class="abs" style="left:77px;top:342px;width:26px;height:1px;background:#c4c9cf;"></div>
<div class="abs" style="left:103px;top:342px;width:737px;height:1px;background:#dadcdd;"></div>
<div class="abs" style="left:77px;top:362px;width:26px;height:1px;background:#c4c9cf;"></div>
<div class="abs" style="left:103px;top:362px;width:737px;height:1px;background:#dadcdd;"></div>
<div class="abs" style="left:77px;top:382px;width:26px;height:1px;background:#c4c9cf;"></div>
<div class="abs" style="left:103px;top:382px;width:737px;height:1px;background:#dadcdd;"></div>
<div class="abs" style="left:77px;top:402px;width:26px;height:1px;background:#c4c9cf;"></div>
<div class="abs" style="left:103px;top:402px;width:737px;height:1px;background:#dadcdd;"></div>
<div class="abs" style="left:77px;top:422px;width:26px;height:1px;background:#c4c9cf;"></div>
<div class="abs" style="left:103px;top:422px;width:737px;height:1px;background:#dadcdd;"></div>
<div class="abs" style="left:77px;top:442px;width:26px;height:1px;background:#c4c9cf;"></div>
<div class="abs" style="left:103px;top:442px;width:737px;height:1px;background:#dadcdd;"></div>
<div class="abs" style="left:77px;top:462px;width:26px;height:1px;background:#c4c9cf;"></div>
<div class="abs" style="left:103px;top:462px;width:737px;height:1px;background:#dadcdd;"></div>
<div class="abs" style="left:77px;top:482px;width:26px;height:1px;background:#c4c9cf;"></div>
<div class="abs" style="left:103px;top:482px;width:737px;height:1px;background:#dadcdd;"></div>
<div class="abs" style="left:77px;top:502px;width:26px;height:1px;background:#c4c9cf;"></div>
<div class="abs" style="left:103px;top:502px;width:737px;height:1px;background:#dadcdd;"></div>
<div class="abs" style="left:77px;top:522px;width:26px;height:1px;background:#c4c9cf;"></div>
<div class="abs" style="left:103px;top:522px;width:737px;height:1px;background:#dadcdd;"></div>
<div class="abs" style="left:77px;top:542px;width:26px;height:1px;background:#c4c9cf;"></div>
<div class="abs" style="left:103px;top:542px;width:737px;height:1px;background:#dadcdd;"></div>
<div class="abs" style="left:77px;top:562px;width:26px;height:1px;background:#c4c9cf;"></div>
<div class="abs" style="left:103px;top:562px;width:737px;height:1px;background:#dadcdd;"></div>
<div class="abs" style="left:77px;top:582px;width:26px;height:1px;background:#c4c9cf;"></div>
<div class="abs" style="left:103px;top:582px;width:737px;height:1px;background:#dadcdd;"></div>
<div class="abs" style="left:77px;top:602px;width:26px;height:1px;background:#c4c9cf;"></div>
<div class="abs" style="left:103px;top:602px;width:737px;height:1px;background:#dadcdd;"></div>
<div class="abs" style="left:77px;top:622px;width:26px;height:1px;background:#c4c9cf;"></div>
<div class="abs" style="left:103px;top:622px;width:737px;height:1px;background:#dadcdd;"></div>
<div class="abs" style="left:77px;top:642px;width:26px;height:1px;background:#c4c9cf;"></div>
<div class="abs" style="left:103px;top:642px;width:737px;height:1px;background:#dadcdd;"></div>
<div class="abs" style="left:77px;top:662px;width:26px;height:1px;background:#c4c9cf;"></div>
<div class="abs" style="left:103px;top:662px;width:737px;height:1px;background:#dadcdd;"></div>
<div class="abs" style="left:103px;top:235px;width:737px;height:24px;background:#fff;"></div>
<div class="abs" style="left:103px;top:260px;width:737px;height:20px;background:#fff;"></div>
<div class="t" style="left:77px;width:26px;text-align:center;top:218.9px;font-size:13px;color:#2a2f36;font-weight:400;">1</div>
<div class="t" style="left:77px;width:26px;text-align:center;top:243.9px;font-size:13px;color:#2a2f36;font-weight:400;">2</div>
<div class="t" style="left:77px;width:26px;text-align:center;top:264.9px;font-size:13px;color:#2a2f36;font-weight:400;">3</div>
<div class="t" style="left:77px;width:26px;text-align:center;top:285.9px;font-size:13px;color:#2a2f36;font-weight:400;">4</div>
<div class="t" style="left:77px;width:26px;text-align:center;top:306.9px;font-size:13px;color:#2a2f36;font-weight:400;">5</div>
<div class="t" style="left:77px;width:26px;text-align:center;top:326.9px;font-size:13px;color:#2a2f36;font-weight:400;">6</div>
<div class="t" style="left:77px;width:26px;text-align:center;top:346.9px;font-size:13px;color:#2a2f36;font-weight:400;">7</div>
<div class="t" style="left:77px;width:26px;text-align:center;top:366.9px;font-size:13px;color:#2a2f36;font-weight:400;">8</div>
<div class="t" style="left:77px;width:26px;text-align:center;top:386.9px;font-size:13px;color:#2a2f36;font-weight:400;">9</div>
<div class="t" style="left:77px;width:26px;text-align:center;top:406.9px;font-size:13px;color:#2a2f36;font-weight:400;">10</div>
<div class="t" style="left:77px;width:26px;text-align:center;top:426.9px;font-size:13px;color:#2a2f36;font-weight:400;">11</div>
<div class="t" style="left:77px;width:26px;text-align:center;top:446.9px;font-size:13px;color:#2a2f36;font-weight:400;">12</div>
<div class="t" style="left:77px;width:26px;text-align:center;top:466.9px;font-size:13px;color:#2a2f36;font-weight:400;">13</div>
<div class="t" style="left:77px;width:26px;text-align:center;top:486.9px;font-size:13px;color:#2a2f36;font-weight:400;">14</div>
<div class="t" style="left:77px;width:26px;text-align:center;top:506.9px;font-size:13px;color:#2a2f36;font-weight:400;">15</div>
<div class="t" style="left:77px;width:26px;text-align:center;top:527.0px;font-size:13px;color:#2a2f36;font-weight:400;">16</div>
<div class="t" style="left:77px;width:26px;text-align:center;top:547.0px;font-size:13px;color:#2a2f36;font-weight:400;">17</div>
<div class="t" style="left:77px;width:26px;text-align:center;top:567.0px;font-size:13px;color:#2a2f36;font-weight:400;">18</div>
<div class="t" style="left:77px;width:26px;text-align:center;top:587.0px;font-size:13px;color:#2a2f36;font-weight:400;">19</div>
<div class="t" style="left:77px;width:26px;text-align:center;top:607.0px;font-size:13px;color:#2a2f36;font-weight:400;">20</div>
<div class="t" style="left:77px;width:26px;text-align:center;top:627.0px;font-size:13px;color:#2a2f36;font-weight:400;">21</div>
<div class="t" style="left:77px;width:26px;text-align:center;top:647.0px;font-size:13px;color:#2a2f36;font-weight:400;">22</div>
<div class="abs" style="left:77px;top:462px;width:26px;height:21px;background:linear-gradient(180deg,#fed45c,#ffe77c);border-top:1px solid #c89a3e;border-bottom:1px solid #c89a3e;border-right:1px solid #c89a3e;"></div>
<div class="t" style="left:77px;width:26px;text-align:center;top:466.9px;font-size:13px;color:#2a2f36;font-weight:400;">13</div>
<div class="t" style="left:394px;top:239.9px;font-size:16.6px;color:#000;font-weight:700;transform:scaleX(0.9750);transform-origin:0 0;">Таблица заработной платы персонала</div>
<div class="t" style="left:509px;top:264.6px;font-size:13.4px;color:#000;font-weight:700;transform:scaleX(1.0772);transform-origin:0 0;">за 2016 год</div>
<div class="abs" style="left:103px;top:343px;width:737px;height:19px;background:#5f4a7b;"></div>
<div class="abs" style="left:103px;top:363px;width:160px;height:19px;background:#92d050;"></div>
<div class="abs" style="left:103px;top:383px;width:160px;height:19px;background:#92d050;"></div>
<div class="abs" style="left:103px;top:403px;width:160px;height:19px;background:#92d050;"></div>
<div class="abs" style="left:103px;top:423px;width:160px;height:19px;background:#92d050;"></div>
<div class="abs" style="left:103px;top:443px;width:160px;height:19px;background:#92d050;"></div>
<div class="abs" style="left:103px;top:463px;width:160px;height:19px;background:#92d050;"></div>
<div class="abs" style="left:103px;top:483px;width:160px;height:19px;background:#92d050;"></div>
<div class="abs" style="left:103px;top:503px;width:160px;height:19px;background:#92d050;"></div>
<div class="abs" style="left:103px;top:523px;width:160px;height:19px;background:#92d050;"></div>
<div class="abs" style="left:103px;top:543px;width:160px;height:19px;background:#92d050;"></div>
<div class="abs" style="left:103px;top:563px;width:160px;height:19px;background:#92d050;"></div>
<div class="abs" style="left:103px;top:583px;width:160px;height:19px;background:#92d050;"></div>
<div class="abs" style="left:103px;top:603px;width:160px;height:19px;background:#92d050;"></div>
<div class="abs" style="left:103px;top:623px;width:160px;height:19px;background:#92d050;"></div>
<div class="abs" style="left:103px;top:643px;width:160px;height:19px;background:#92d050;"></div>
<div class="abs" style="left:103px;top:663px;width:160px;height:4px;background:#92d050;"></div>
<div class="abs" style="left:103px;top:342px;width:737px;height:1px;background:#000;"></div>
<div class="abs" style="left:103px;top:362px;width:737px;height:1px;background:#000;"></div>
<div class="abs" style="left:103px;top:382px;width:737px;height:1px;background:#000;"></div>
<div class="abs" style="left:103px;top:402px;width:737px;height:1px;background:#000;"></div>
<div class="abs" style="left:103px;top:422px;width:737px;height:1px;background:#000;"></div>
<div class="abs" style="left:103px;top:442px;width:737px;height:1px;background:#000;"></div>
<div class="abs" style="left:103px;top:462px;width:737px;height:1px;background:#000;"></div>
<div class="abs" style="left:103px;top:482px;width:737px;height:1px;background:#000;"></div>
<div class="abs" style="left:103px;top:502px;width:737px;height:1px;background:#000;"></div>
<div class="abs" style="left:103px;top:522px;width:737px;height:1px;background:#000;"></div>
<div class="abs" style="left:103px;top:542px;width:737px;height:1px;background:#000;"></div>
<div class="abs" style="left:103px;top:562px;width:737px;height:1px;background:#000;"></div>
<div class="abs" style="left:103px;top:582px;width:737px;height:1px;background:#000;"></div>
<div class="abs" style="left:103px;top:602px;width:737px;height:1px;background:#000;"></div>
<div class="abs" style="left:103px;top:622px;width:737px;height:1px;background:#000;"></div>
<div class="abs" style="left:103px;top:642px;width:737px;height:1px;background:#000;"></div>
<div class="abs" style="left:103px;top:662px;width:737px;height:1px;background:#000;"></div>
<div class="abs" style="left:263px;top:342px;width:1px;height:325px;background:#000;"></div>
<div class="abs" style="left:424px;top:342px;width:1px;height:325px;background:#000;"></div>
<div class="abs" style="left:616px;top:342px;width:1px;height:325px;background:#000;"></div>
<div class="abs" style="left:777px;top:342px;width:1px;height:325px;background:#000;"></div>
<div class="t" style="left:170.25px;top:346.9px;font-size:13.0px;color:#fff;font-weight:700;transform:scaleX(0.9982);transform-origin:0 0;">Имя</div>
<div class="t" style="left:332.6px;top:346.9px;font-size:13.0px;color:#fff;font-weight:700;transform:scaleX(0.9432);transform-origin:0 0;">Пол</div>
<div class="t" style="left:453.65px;top:346.9px;font-size:13.0px;color:#fff;font-weight:700;transform:scaleX(0.9761);transform-origin:0 0;">Категория персонала</div>
<div class="t" style="left:682.7px;top:346.9px;font-size:13.0px;color:#fff;font-weight:700;transform:scaleX(0.9836);transform-origin:0 0;">Дата</div>
<div class="abs" style="left:778px;top:343px;width:62px;height:19px;overflow:hidden">
<div class="t" style="left:9.6px;top:4.0px;font-size:13.0px;color:#fff;font-weight:700;">Сумма за</div>
</div>
<div class="t" style="left:104.6px;top:366.9px;font-size:13.5px;color:#000;font-weight:400;transform:scaleX(1.0194);transform-origin:0 0;-webkit-text-stroke:0.12px #000;">Николаев А. Д.</div>
<div class="t" style="left:327.4px;top:366.9px;font-size:13.5px;color:#000;font-weight:400;transform:scaleX(1.0850);transform-origin:0 0;-webkit-text-stroke:0.12px #000;">муж.</div>
<div class="t" style="left:455.90000000000003px;top:366.9px;font-size:13.5px;color:#000;font-weight:400;transform:scaleX(1.0190);transform-origin:0 0;-webkit-text-stroke:0.12px #000;">Основной персонал</div>
<div class="t" style="left:664.3000000000001px;top:366.9px;font-size:13.5px;color:#000;font-weight:400;transform:scaleX(0.9441);transform-origin:0 0;-webkit-text-stroke:0.12px #000;">25.05.2016</div>
<div class="t" style="left:104.6px;top:386.9px;font-size:13.5px;color:#000;font-weight:400;transform:scaleX(0.9697);transform-origin:0 0;-webkit-text-stroke:0.12px #000;">Сафронова В. М.</div>
<div class="t" style="left:327.65px;top:386.9px;font-size:13.5px;color:#000;font-weight:400;transform:scaleX(1.1207);transform-origin:0 0;-webkit-text-stroke:0.12px #000;">жен.</div>
<div class="t" style="left:455.90000000000003px;top:386.9px;font-size:13.5px;color:#000;font-weight:400;transform:scaleX(1.0190);transform-origin:0 0;-webkit-text-stroke:0.12px #000;">Основной персонал</div>
<div class="t" style="left:664.3000000000001px;top:386.9px;font-size:13.5px;color:#000;font-weight:400;transform:scaleX(0.9441);transform-origin:0 0;-webkit-text-stroke:0.12px #000;">25.05.2016</div>
<div class="t" style="left:104.6px;top:406.9px;font-size:13.5px;color:#000;font-weight:400;transform:scaleX(0.9899);transform-origin:0 0;-webkit-text-stroke:0.12px #000;">Коваль Л. П.</div>
<div class="t" style="left:327.65px;top:406.9px;font-size:13.5px;color:#000;font-weight:400;transform:scaleX(1.1207);transform-origin:0 0;-webkit-text-stroke:0.12px #000;">жен.</div>
<div class="t" style="left:430.90000000000003px;top:406.9px;font-size:13.5px;color:#000;font-weight:400;transform:scaleX(1.0135);transform-origin:0 0;-webkit-text-stroke:0.12px #000;">Вспомогательный персонал</div>
<div class="t" style="left:664.3000000000001px;top:406.9px;font-size:13.5px;color:#000;font-weight:400;transform:scaleX(0.9441);transform-origin:0 0;-webkit-text-stroke:0.12px #000;">25.05.2016</div>
<div class="t" style="left:104.6px;top:426.9px;font-size:13.5px;color:#000;font-weight:400;-webkit-text-stroke:0.12px #000;">Парфенов Д. Ф.</div>
<div class="t" style="left:327.4px;top:426.9px;font-size:13.5px;color:#000;font-weight:400;transform:scaleX(1.0850);transform-origin:0 0;-webkit-text-stroke:0.12px #000;">муж.</div>
<div class="t" style="left:455.90000000000003px;top:426.9px;font-size:13.5px;color:#000;font-weight:400;transform:scaleX(1.0190);transform-origin:0 0;-webkit-text-stroke:0.12px #000;">Основной персонал</div>
<div class="t" style="left:664.3000000000001px;top:426.9px;font-size:13.5px;color:#000;font-weight:400;transform:scaleX(0.9441);transform-origin:0 0;-webkit-text-stroke:0.12px #000;">25.05.2016</div>
<div class="t" style="left:104.6px;top:446.9px;font-size:13.5px;color:#000;font-weight:400;-webkit-text-stroke:0.12px #000;">Петров Ф. Л.</div>
<div class="t" style="left:327.4px;top:446.9px;font-size:13.5px;color:#000;font-weight:400;transform:scaleX(1.0850);transform-origin:0 0;-webkit-text-stroke:0.12px #000;">муж.</div>
<div class="t" style="left:455.90000000000003px;top:446.9px;font-size:13.5px;color:#000;font-weight:400;transform:scaleX(1.0190);transform-origin:0 0;-webkit-text-stroke:0.12px #000;">Основной персонал</div>
<div class="t" style="left:664.3000000000001px;top:446.9px;font-size:13.5px;color:#000;font-weight:400;transform:scaleX(0.9441);transform-origin:0 0;-webkit-text-stroke:0.12px #000;">25.05.2016</div>
<div class="t" style="left:151px;top:466.9px;font-size:13.5px;color:#000;font-weight:400;transform:scaleX(0.9618);transform-origin:0 0;-webkit-text-stroke:0.12px #000;">25.05.2016</div>
<div class="t" style="left:104.6px;top:486.9px;font-size:13.5px;color:#000;font-weight:400;-webkit-text-stroke:0.12px #000;">Попова М. Д.</div>
<div class="t" style="left:327.65px;top:486.9px;font-size:13.5px;color:#000;font-weight:400;transform:scaleX(1.1207);transform-origin:0 0;-webkit-text-stroke:0.12px #000;">жен.</div>
<div class="t" style="left:430.90000000000003px;top:486.9px;font-size:13.5px;color:#000;font-weight:400;transform:scaleX(1.0135);transform-origin:0 0;-webkit-text-stroke:0.12px #000;">Вспомогательный персонал</div>
<div class="t" style="left:664.3000000000001px;top:486.9px;font-size:13.5px;color:#000;font-weight:400;transform:scaleX(0.9441);transform-origin:0 0;-webkit-text-stroke:0.12px #000;">25.05.2016</div>
<div class="t" style="left:104.6px;top:506.9px;font-size:13.5px;color:#000;font-weight:400;transform:scaleX(1.0194);transform-origin:0 0;-webkit-text-stroke:0.12px #000;">Николаев А. Д.</div>
<div class="t" style="left:327.4px;top:506.9px;font-size:13.5px;color:#000;font-weight:400;transform:scaleX(1.0850);transform-origin:0 0;-webkit-text-stroke:0.12px #000;">муж.</div>
<div class="t" style="left:455.90000000000003px;top:506.9px;font-size:13.5px;color:#000;font-weight:400;transform:scaleX(1.0190);transform-origin:0 0;-webkit-text-stroke:0.12px #000;">Основной персонал</div>
<div class="t" style="left:664.3000000000001px;top:506.9px;font-size:13.5px;color:#000;font-weight:400;transform:scaleX(0.9441);transform-origin:0 0;-webkit-text-stroke:0.12px #000;">23.06.2016</div>
<div class="t" style="left:104.6px;top:526.9px;font-size:13.5px;color:#000;font-weight:400;transform:scaleX(0.9697);transform-origin:0 0;-webkit-text-stroke:0.12px #000;">Сафронова В. М.</div>
<div class="t" style="left:327.65px;top:526.9px;font-size:13.5px;color:#000;font-weight:400;transform:scaleX(1.1207);transform-origin:0 0;-webkit-text-stroke:0.12px #000;">жен.</div>
<div class="t" style="left:455.90000000000003px;top:526.9px;font-size:13.5px;color:#000;font-weight:400;transform:scaleX(1.0190);transform-origin:0 0;-webkit-text-stroke:0.12px #000;">Основной персонал</div>
<div class="t" style="left:664.3000000000001px;top:526.9px;font-size:13.5px;color:#000;font-weight:400;transform:scaleX(0.9441);transform-origin:0 0;-webkit-text-stroke:0.12px #000;">23.06.2016</div>
<div class="t" style="left:104.6px;top:546.9px;font-size:13.5px;color:#000;font-weight:400;transform:scaleX(0.9899);transform-origin:0 0;-webkit-text-stroke:0.12px #000;">Коваль Л. П.</div>
<div class="t" style="left:327.65px;top:546.9px;font-size:13.5px;color:#000;font-weight:400;transform:scaleX(1.1207);transform-origin:0 0;-webkit-text-stroke:0.12px #000;">жен.</div>
<div class="t" style="left:430.90000000000003px;top:546.9px;font-size:13.5px;color:#000;font-weight:400;transform:scaleX(1.0135);transform-origin:0 0;-webkit-text-stroke:0.12px #000;">Вспомогательный персонал</div>
<div class="t" style="left:664.3000000000001px;top:546.9px;font-size:13.5px;color:#000;font-weight:400;transform:scaleX(0.9441);transform-origin:0 0;-webkit-text-stroke:0.12px #000;">23.06.2016</div>
<div class="t" style="left:104.6px;top:566.9px;font-size:13.5px;color:#000;font-weight:400;-webkit-text-stroke:0.12px #000;">Парфенов Д. Ф.</div>
<div class="t" style="left:327.4px;top:566.9px;font-size:13.5px;color:#000;font-weight:400;transform:scaleX(1.0850);transform-origin:0 0;-webkit-text-stroke:0.12px #000;">муж.</div>
<div class="t" style="left:455.90000000000003px;top:566.9px;font-size:13.5px;color:#000;font-weight:400;transform:scaleX(1.0190);transform-origin:0 0;-webkit-text-stroke:0.12px #000;">Основной персонал</div>
<div class="t" style="left:664.3000000000001px;top:566.9px;font-size:13.5px;color:#000;font-weight:400;transform:scaleX(0.9441);transform-origin:0 0;-webkit-text-stroke:0.12px #000;">23.06.2016</div>
<div class="t" style="left:104.6px;top:586.9px;font-size:13.5px;color:#000;font-weight:400;-webkit-text-stroke:0.12px #000;">Петров Ф. Л.</div>
<div class="t" style="left:327.4px;top:586.9px;font-size:13.5px;color:#000;font-weight:400;transform:scaleX(1.0850);transform-origin:0 0;-webkit-text-stroke:0.12px #000;">муж.</div>
<div class="t" style="left:455.90000000000003px;top:586.9px;font-size:13.5px;color:#000;font-weight:400;transform:scaleX(1.0190);transform-origin:0 0;-webkit-text-stroke:0.12px #000;">Основной персонал</div>
<div class="t" style="left:664.3000000000001px;top:586.9px;font-size:13.5px;color:#000;font-weight:400;transform:scaleX(0.9441);transform-origin:0 0;-webkit-text-stroke:0.12px #000;">23.06.2016</div>
<div class="t" style="left:104.6px;top:606.9px;font-size:13.5px;color:#000;font-weight:400;-webkit-text-stroke:0.12px #000;">Попова М. Д.</div>
<div class="t" style="left:327.65px;top:606.9px;font-size:13.5px;color:#000;font-weight:400;transform:scaleX(1.1207);transform-origin:0 0;-webkit-text-stroke:0.12px #000;">жен.</div>
<div class="t" style="left:430.90000000000003px;top:606.9px;font-size:13.5px;color:#000;font-weight:400;transform:scaleX(1.0135);transform-origin:0 0;-webkit-text-stroke:0.12px #000;">Вспомогательный персонал</div>
<div class="t" style="left:664.3000000000001px;top:606.9px;font-size:13.5px;color:#000;font-weight:400;transform:scaleX(0.9441);transform-origin:0 0;-webkit-text-stroke:0.12px #000;">23.06.2016</div>
<div class="t" style="left:104.6px;top:626.9px;font-size:13.5px;color:#000;font-weight:400;transform:scaleX(1.0194);transform-origin:0 0;-webkit-text-stroke:0.12px #000;">Николаев А. Д.</div>
<div class="t" style="left:327.4px;top:626.9px;font-size:13.5px;color:#000;font-weight:400;transform:scaleX(1.0850);transform-origin:0 0;-webkit-text-stroke:0.12px #000;">муж.</div>
<div class="t" style="left:455.90000000000003px;top:626.9px;font-size:13.5px;color:#000;font-weight:400;transform:scaleX(1.0190);transform-origin:0 0;-webkit-text-stroke:0.12px #000;">Основной персонал</div>
<div class="t" style="left:664.3000000000001px;top:626.9px;font-size:13.5px;color:#000;font-weight:400;transform:scaleX(0.9441);transform-origin:0 0;-webkit-text-stroke:0.12px #000;">25.07.2016</div>
<div class="t" style="left:104.6px;top:646.9px;font-size:13.5px;color:#000;font-weight:400;transform:scaleX(0.9697);transform-origin:0 0;-webkit-text-stroke:0.12px #000;">Сафронова В. М.</div>
<div class="t" style="left:327.65px;top:646.9px;font-size:13.5px;color:#000;font-weight:400;transform:scaleX(1.1207);transform-origin:0 0;-webkit-text-stroke:0.12px #000;">жен.</div>
<div class="t" style="left:455.90000000000003px;top:646.9px;font-size:13.5px;color:#000;font-weight:400;transform:scaleX(1.0190);transform-origin:0 0;-webkit-text-stroke:0.12px #000;">Основной персонал</div>
<div class="t" style="left:664.3000000000001px;top:646.9px;font-size:13.5px;color:#000;font-weight:400;transform:scaleX(0.9441);transform-origin:0 0;-webkit-text-stroke:0.12px #000;">25.07.2016</div>
<div class="abs" style="left:102px;top:461px;width:163px;height:23px;border:1px solid #6a2fb0;border-right-color:#000;"></div>
<div class="abs" style="left:103px;top:462px;width:161px;height:21px;border:1px solid #fff;"></div>
<div class="abs" style="left:104px;top:463px;width:159px;height:19px;border:1px solid #6a2fb0;"></div>
<div class="abs" style="left:261px;top:480px;width:6px;height:6px;background:#fff;"></div>
<div class="abs" style="left:261px;top:480px;width:2px;height:2px;background:#6a2fb0;"></div>
<div class="abs" style="left:261px;top:483px;width:2px;height:2px;background:#6a2fb0;"></div>
<div class="abs" style="left:264px;top:480px;width:2px;height:2px;background:#000;"></div>
<div class="abs" style="left:264px;top:483px;width:2px;height:2px;background:#000;"></div>
<div class="abs" style="left:34px;top:451px;width:33px;height:44px;border:5px solid #f00;border-radius:14px;box-shadow:inset 0 0 6px rgba(0,0,0,0.35), 0 0 4px rgba(0,0,0,0.25);"></div>
<div class="abs" style="left:42px;top:465px;width:16px;height:16px;background:linear-gradient(180deg,#f3f4f6,#e2e5e9);border:1px solid #8a9097;"></div>
<div class="abs" style="left:46px;top:473px;width:8px;height:2px;background:#000;"></div>
<div class="abs" style="left:47px;top:481px;width:2px;height:120px;background:#000;"></div>
<div class="abs" style="left:47px;top:599px;width:6px;height:2px;background:#000;"></div>
<div class="abs" style="left:63px;top:492px;width:2px;height:2px;background:#000;"></div>
<div class="abs" style="left:63px;top:512px;width:2px;height:2px;background:#000;"></div>
<div class="abs" style="left:63px;top:532px;width:2px;height:2px;background:#000;"></div>
<div class="abs" style="left:63px;top:552px;width:2px;height:2px;background:#000;"></div>
<div class="abs" style="left:63px;top:572px;width:2px;height:2px;background:#000;"></div>
<div class="abs" style="left:63px;top:592px;width:2px;height:2px;background:#000;"></div>
<div class="abs" style="left:840px;top:198px;width:16px;height:469px;background:linear-gradient(90deg,#d3d8de,#e3e6ea);"></div>
<div class="abs" style="left:840px;top:199px;width:16px;height:4px;background:#fff;border:1px solid #8c949c;"></div>
<svg class="abs" style="left:843px;top:209px;" width="9" height="5" viewBox="0 0 9 5"><path d="M0 5 L4.5 0 L9 5Z" fill="#4a5058"/></svg>
<div class="abs" style="left:840px;top:220px;width:15px;height:53px;border:1px solid #8d949b;border-radius:2px;background:linear-gradient(90deg,#f6f7f9,#e6e9ed 60%,#d9dde2);"></div>
<div class="abs" style="left:844px;top:243px;width:7px;height:1px;background:#7b828a;"></div>
<div class="abs" style="left:844px;top:245px;width:7px;height:1px;background:#7b828a;"></div>
<div class="abs" style="left:844px;top:247px;width:7px;height:1px;background:#7b828a;"></div>
<div class="abs" style="left:844px;top:249px;width:7px;height:1px;background:#7b828a;"></div>
<svg class="abs" style="left:843px;top:656px;" width="9" height="5" viewBox="0 0 9 5"><path d="M0 0 L4.5 5 L9 0Z" fill="#4a5058"/></svg>
<div class="abs" style="left:40px;top:667px;width:816px;height:16px;background:linear-gradient(180deg,#e9ecf0,#e1e5ea);border-top:1px solid #a6acb3;"></div>
<div class="abs" style="left:40px;top:668px;width:816px;height:1px;background:rgba(255,255,255,0.8);"></div>
<div class="abs" style="left:40px;top:682px;width:816px;height:2px;background:#979da4;"></div>
<svg class="abs" style="left:45px;top:671px;" width="8" height="7" viewBox="0 0 8 7"><rect x="0" y="0" width="1.5" height="7" fill="#3c444d"/><path d="M7.5 0 V7 L2 3.5Z" fill="#3c444d"/></svg>
<svg class="abs" style="left:61px;top:671px;" width="6" height="7" viewBox="0 0 6 7"><path d="M5.5 0 V7 L0 3.5Z" fill="#3c444d"/></svg>
<svg class="abs" style="left:75px;top:671px;" width="6" height="7" viewBox="0 0 6 7"><path d="M0.5 0 V7 L6 3.5Z" fill="#3c444d"/></svg>
<svg class="abs" style="left:89px;top:671px;" width="8" height="7" viewBox="0 0 8 7"><path d="M0.5 0 V7 L6 3.5Z" fill="#3c444d"/><rect x="6.5" y="0" width="1.5" height="7" fill="#3c444d"/></svg>
<div class="abs" style="left:102px;top:668px;width:1px;height:14px;background:#c1c6cc;"></div>
<svg class="abs" style="left:109px;top:667px;" width="14" height="15" viewBox="0 0 14 15"><path d="M0.5 14.5 L13.5 1.5" stroke="#8f969e" stroke-width="1"/><path d="M0 15 L4 11 L6 15Z" fill="#c3c8ce"/></svg>
<div class="t" style="left:123px;top:669.6px;font-size:12.2px;color:#2b3440;font-weight:400;">Лист5</div>
<svg class="abs" style="left:162px;top:667px;" width="14" height="15" viewBox="0 0 14 15"><path d="M0.5 14.5 L13.5 1.5" stroke="#8f969e" stroke-width="1"/><path d="M0 15 L4 11 L6 15Z" fill="#c3c8ce"/></svg>
<div class="t" style="left:176px;top:669.6px;font-size:12.2px;color:#2b3440;font-weight:400;">Лист8</div>
<svg class="abs" style="left:215px;top:667px;" width="14" height="15" viewBox="0 0 14 15"><path d="M0.5 14.5 L13.5 1.5" stroke="#8f969e" stroke-width="1"/><path d="M0 15 L4 11 L6 15Z" fill="#c3c8ce"/></svg>
<div class="t" style="left:229px;top:669.6px;font-size:12.2px;color:#2b3440;font-weight:400;">Лист9</div>
<svg class="abs" style="left:268px;top:667px;" width="14" height="15" viewBox="0 0 14 15"><path d="M0.5 14.5 L13.5 1.5" stroke="#8f969e" stroke-width="1"/><path d="M0 15 L4 11 L6 15Z" fill="#c3c8ce"/></svg>
<div class="t" style="left:282px;top:669.6px;font-size:12.2px;color:#2b3440;font-weight:400;">Лист10</div>
<svg class="abs" style="left:330px;top:667px;" width="14" height="15" viewBox="0 0 14 15"><path d="M0.5 14.5 L13.5 1.5" stroke="#8f969e" stroke-width="1"/><path d="M0 15 L4 11 L6 15Z" fill="#c3c8ce"/></svg>
<div class="t" style="left:344px;top:669.6px;font-size:12.2px;color:#2b3440;font-weight:400;">Лист11</div>
<div class="abs" style="left:393px;top:668px;width:1px;height:14px;background:#8f969e;"></div>
<div class="abs" style="left:394px;top:667px;width:56px;height:15px;background:#fff;"></div>
<div class="t" style="left:402.5px;top:669.6px;font-size:12.2px;color:#1e2630;font-weight:700;">Лист1</div>
<svg class="abs" style="left:443px;top:667px;" width="14" height="15" viewBox="0 0 14 15"><path d="M0.5 14.5 L13.5 1.5" stroke="#8f969e" stroke-width="1"/><path d="M0 15 L4 11 L6 15Z" fill="#c3c8ce"/></svg>
<div class="t" style="left:457px;top:669.6px;font-size:12.2px;color:#2b3440;font-weight:400;">Лист2</div>
<svg class="abs" style="left:496px;top:667px;" width="14" height="15" viewBox="0 0 14 15"><path d="M0.5 14.5 L13.5 1.5" stroke="#8f969e" stroke-width="1"/><path d="M0 15 L4 11 L6 15Z" fill="#c3c8ce"/></svg>
<div class="abs" style="left:510px;top:667px;width:11px;height:15px;overflow:hidden"><div class="t" style="left:0;top:2.9px;font-size:12.2px;color:#2b3440">Лист</div></div>
<div class="abs" style="left:103px;top:667px;width:291px;height:1px;background:#a6acb3;"></div>
<div class="abs" style="left:450px;top:667px;width:71px;height:1px;background:#a6acb3;"></div>
<div class="abs" style="left:520px;top:668px;width:7px;height:14px;background:#fff;border:1px solid #7b838c;border-radius:1px;"></div>
<div class="abs" style="left:522px;top:671px;width:1px;height:8px;background:#7b838c;"></div>
<div class="abs" style="left:527px;top:667px;width:313px;height:15px;background:linear-gradient(180deg,#d6dbe1,#e4e7eb);border-top:1px solid #a6acb3;"></div>
<svg class="abs" style="left:533px;top:671px;" width="6" height="8" viewBox="0 0 6 8"><path d="M5.5 0 V8 L0 4Z" fill="#3a4048"/></svg>
<div class="abs" style="left:545px;top:667px;width:168px;height:16px;border:1px solid #8d949b;border-radius:2px;background:linear-gradient(180deg,#f6f7f9,#e6e9ed 60%,#dadee3);"></div>
<div class="abs" style="left:625px;top:671px;width:1px;height:7px;background:#7b828a;"></div>
<div class="abs" style="left:627px;top:671px;width:1px;height:7px;background:#7b828a;"></div>
<div class="abs" style="left:629px;top:671px;width:1px;height:7px;background:#7b828a;"></div>
<div class="abs" style="left:631px;top:671px;width:1px;height:7px;background:#7b828a;"></div>
<svg class="abs" style="left:820px;top:671px;" width="6" height="8" viewBox="0 0 6 8"><path d="M0.5 0 V8 L6 4Z" fill="#3a4048"/></svg>
<div class="abs" style="left:832px;top:668px;width:8px;height:14px;background:#fff;border:1px solid #7b838c;border-radius:1px;"></div>
<div class="abs" style="left:835px;top:671px;width:1px;height:8px;background:#7b838c;"></div>
<div class="abs" style="left:840px;top:667px;width:17px;height:15px;background:#dfe3e8;"></div>
<div class="abs" style="left:40px;top:683px;width:816px;height:22px;background:linear-gradient(180deg,#f1f3f5 0%,#e4e7eb 50%,#d9dde2 100%);border-top:1px solid #fafbfc;"></div>
<div class="t" style="left:48.5px;top:688.1px;font-size:11.6px;color:#2b3440;font-weight:400;">Готово</div>
<div class="abs" style="left:94px;top:686px;width:1px;height:17px;background:#b9bec4;"></div>
<div class="abs" style="left:95px;top:686px;width:1px;height:17px;background:#fff;"></div>
<svg class="abs" style="left:104px;top:687px;" width="15" height="13" viewBox="0 0 15 13"><defs><linearGradient id="si" x1="0" y1="0" x2="0" y2="1"><stop offset="0" stop-color="#5b8ee8"/><stop offset="1" stop-color="#2a5ec8"/></linearGradient><radialGradient id="rb" cx="35%" cy="35%" r="65%"><stop offset="0" stop-color="#ffc0a0"/><stop offset="0.5" stop-color="#f06a3a"/><stop offset="1" stop-color="#b8300e"/></radialGradient></defs><rect x="0.5" y="0.5" width="14" height="12" rx="0.8" fill="#fff" stroke="#2f4f78"/><rect x="0.5" y="0.5" width="14" height="3" fill="url(#si)"/><path d="M2 6.5 H5 M6 6.5 H9 M10 6.5 H13 M2 8.5 H5 M6 8.5 H9 M10 8.5 H13 M2 10.5 H5 M6 10.5 H9 M10 10.5 H13" stroke="#7d92c8" stroke-width="1"/><path d="M1 12.5 H14" stroke="#22405f" stroke-width="1"/><circle cx="3.2" cy="3" r="2.9" fill="url(#rb)"/></svg>
<div class="abs" style="left:130px;top:686px;width:1px;height:17px;background:#b9bec4;"></div>
<div class="abs" style="left:131px;top:686px;width:1px;height:17px;background:#fff;"></div>
<div class="abs" style="left:600px;top:686px;width:1px;height:17px;background:#b9bec4;"></div>
<div class="abs" style="left:604px;top:685px;width:19px;height:19px;border:1px solid #e2b64d;border-radius:3px;background:linear-gradient(180deg,#fff3b8,#ffe17a);"></div>
<svg class="abs" style="left:607px;top:689px;" width="13" height="11" viewBox="0 0 13 11"><rect x="0.5" y="0.5" width="12" height="10" fill="#fff" stroke="#59616b"/><path d="M0.5 4 H12.5 M0.5 7 H12.5 M4.5 0.5 V10.5 M8.5 0.5 V10.5" stroke="#59616b" stroke-width="1.4"/></svg>
<svg class="abs" style="left:625px;top:689px;" width="14" height="12" viewBox="0 0 14 12"><rect x="0.5" y="0.5" width="13" height="11" fill="#c5c9ce" stroke="#6a7178"/><rect x="3.5" y="2.5" width="7" height="7" fill="#fff" stroke="#6a7178" stroke-width="0.8"/><path d="M5 4.5 H9 M5 6 H9 M5 7.5 H9" stroke="#8a9097" stroke-width="0.6"/></svg>
<svg class="abs" style="left:644px;top:689px;" width="14" height="12" viewBox="0 0 14 12"><rect x="0.5" y="0.5" width="13" height="11" fill="#b7bcc2" stroke="#6a7178"/><rect x="2" y="1.5" width="3" height="5" fill="#fff"/><rect x="6" y="1.5" width="3" height="5" fill="#fff"/></svg>
<div class="t" style="left:668.8px;top:688.9px;font-size:11px;color:#2b3440;font-weight:400;transform:scaleX(0.9950);transform-origin:0 0;">100%</div>
<svg class="abs" style="left:705px;top:686px;" width="16" height="16" viewBox="0 0 16 16"><circle cx="8" cy="8" r="7.4" fill="url(#zg)" stroke="#8d949b"/><defs><linearGradient id="zg" x1="0" y1="0" x2="0" y2="1"><stop offset="0" stop-color="#fbfcfd"/><stop offset="1" stop-color="#d8dce1"/></linearGradient></defs><rect x="4" y="7" width="8" height="2" fill="#3a4048"/></svg>
<div class="abs" style="left:721px;top:693px;width:100px;height:1px;background:#9aa0a7;"></div>
<div class="abs" style="left:721px;top:694px;width:100px;height:1px;background:#fff;"></div>
<svg class="abs" style="left:767px;top:687px;" width="10" height="14" viewBox="0 0 10 14"><path d="M0.5 0.5 H9.5 V9 L5 13.5 L0.5 9Z" fill="url(#sg)" stroke="#7b838c"/><defs><linearGradient id="sg" x1="0" y1="0" x2="1" y2="0"><stop offset="0" stop-color="#fff"/><stop offset="1" stop-color="#d6dae0"/></linearGradient></defs></svg>
<svg class="abs" style="left:821px;top:686px;" width="16" height="16" viewBox="0 0 16 16"><circle cx="8" cy="8" r="7.4" fill="url(#zg)" stroke="#8d949b"/><rect x="4" y="7" width="8" height="2" fill="#3a4048"/><rect x="7" y="4" width="2" height="8" fill="#3a4048"/></svg>
<div class="abs" style="left:852px;top:693px;width:2px;height:2px;background:#a7adb4;"></div>
<div class="abs" style="left:849px;top:696px;width:2px;height:2px;background:#a7adb4;"></div>
<div class="abs" style="left:852px;top:696px;width:2px;height:2px;background:#a7adb4;"></div>
<div class="abs" style="left:846px;top:699px;width:2px;height:2px;background:#a7adb4;"></div>
<div class="abs" style="left:849px;top:699px;width:2px;height:2px;background:#a7adb4;"></div>
<div class="abs" style="left:852px;top:699px;width:2px;height:2px;background:#a7adb4;"></div>
<div class="abs" style="left:843px;top:702px;width:2px;height:2px;background:#a7adb4;"></div>
<div class="abs" style="left:846px;top:702px;width:2px;height:2px;background:#a7adb4;"></div>
<div class="abs" style="left:849px;top:702px;width:2px;height:2px;background:#a7adb4;"></div>
<div class="abs" style="left:852px;top:702px;width:2px;height:2px;background:#a7adb4;"></div>
</body></html>
